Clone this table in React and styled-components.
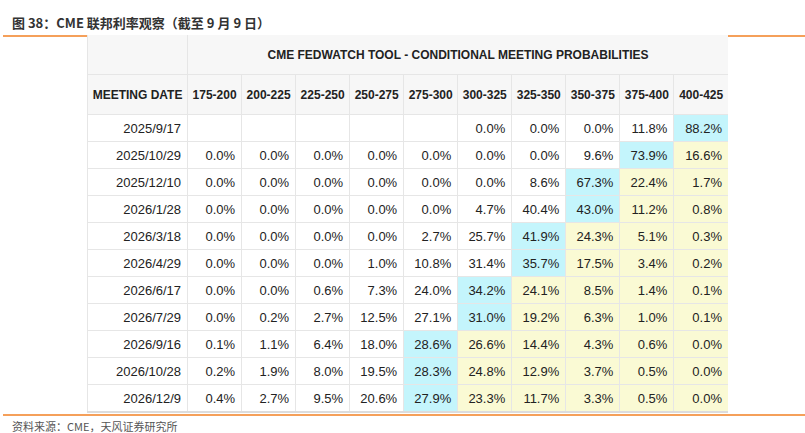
import React from "react";
import styled, { createGlobalStyle } from "styled-components";

const GlobalStyle = createGlobalStyle`
  body {
    margin: 0;
    background: #fff;
    font-family: "Liberation Sans", Arial, sans-serif;
  }
`;

const Page = styled.div`
  width: 805px;
`;

const Title = styled.div`
  height: 37px;
  margin-left: 3px;
  padding-left: 9px;
  box-sizing: border-box;
  display: flex;
  align-items: flex-end;
  padding-bottom: 4px;
  border-bottom: 2px solid #f5a05a;
  font-family: "Noto Sans CJK SC", "Noto Sans", sans-serif;
  font-size: 13px;
  line-height: 16px;
  font-weight: 700;
  color: #333;
`;

const Figure = styled.div`
  position: relative;
  margin-top: -2px;
  padding-left: 87px;
  display: flex;
`;

const Table = styled.table`
  border-collapse: collapse;
  table-layout: fixed;
  width: 641px;
  border-left: 1px solid #e2e2e2;
  border-bottom: 2px solid #dcdcdc;
  color: #222;
`;

const HeadCell = styled.th`
  background: #f7f7f7;
  height: ${(p) => p.$h}px;
  padding: 0;
  border: 1px solid #e6e6e6;
  border-top: none;
  font-size: 12px;
  font-weight: 700;
  text-align: center;
  white-space: nowrap;
  &:last-child {
    border-right: none;
  }
`;

const Cell = styled.td`
  height: 26px;
  padding: 0 6px 0 0;
  border: 1px solid #e6e6e6;
  font-size: 13px;
  text-align: right;
  white-space: nowrap;
  background: ${(p) =>
    p.$tone === "max" ? "#c4f5fc" : p.$tone === "above" ? "#fafad4" : "#fff"};
  &:last-child {
    border-right: none;
  }
`;

const Footer = styled.div`
  margin-top: 1px;
  margin-left: 3px;
  padding: 3px 0 0 9px;
  border-top: 2px solid #f5a05a;
  font-family: "Noto Sans CJK SC", "Noto Sans", sans-serif;
  font-size: 11px;
  line-height: 15px;
  color: #555;
`;

const ranges = [
  "175-200", "200-225", "225-250", "250-275", "275-300",
  "300-325", "325-350", "350-375", "375-400", "400-425",
];

const rows = [
  ["2025/9/17", [null, null, null, null, null, 0.0, 0.0, 0.0, 11.8, 88.2]],
  ["2025/10/29", [0, 0, 0, 0, 0, 0, 0, 9.6, 73.9, 16.6]],
  ["2025/12/10", [0, 0, 0, 0, 0, 0, 8.6, 67.3, 22.4, 1.7]],
  ["2026/1/28", [0, 0, 0, 0, 0, 4.7, 40.4, 43.0, 11.2, 0.8]],
  ["2026/3/18", [0, 0, 0, 0, 2.7, 25.7, 41.9, 24.3, 5.1, 0.3]],
  ["2026/4/29", [0, 0, 0, 1.0, 10.8, 31.4, 35.7, 17.5, 3.4, 0.2]],
  ["2026/6/17", [0, 0, 0.6, 7.3, 24.0, 34.2, 24.1, 8.5, 1.4, 0.1]],
  ["2026/7/29", [0, 0.2, 2.7, 12.5, 27.1, 31.0, 19.2, 6.3, 1.0, 0.1]],
  ["2026/9/16", [0.1, 1.1, 6.4, 18.0, 28.6, 26.6, 14.4, 4.3, 0.6, 0.0]],
  ["2026/10/28", [0.2, 1.9, 8.0, 19.5, 28.3, 24.8, 12.9, 3.7, 0.5, 0.0]],
  ["2026/12/9", [0.4, 2.7, 9.5, 20.6, 27.9, 23.3, 11.7, 3.3, 0.5, 0.0]],
];

// highest probability is blue, everything to its right is yellow
const toneFor = (values, i) => {
  let best = 0;
  values.forEach((v, j) => {
    if (v !== null && v > values[best]) best = j;
  });
  if (i === best) return "max";
  if (i > best) return "above";
  return "plain";
};

export default function App() {
  return (
    <Page>
      <GlobalStyle />
      <Title>图 38：CME 联邦利率观察（截至 9 月 9 日）</Title>
      <Figure>
        <Table>
          <colgroup>
            <col style={{ width: 100 }} />
            {ranges.map((r) => (
              <col key={r} style={{ width: 54 }} />
            ))}
          </colgroup>
          <thead>
            <tr>
              <HeadCell $h={39} />
              <HeadCell $h={39} colSpan={10}>
                CME FEDWATCH TOOL - CONDITIONAL MEETING PROBABILITIES
              </HeadCell>
            </tr>
            <tr>
              <HeadCell $h={39}>MEETING DATE</HeadCell>
              {ranges.map((r) => (
                <HeadCell key={r} $h={39}>
                  {r}
                </HeadCell>
              ))}
            </tr>
          </thead>
          <tbody>
            {rows.map(([date, values]) => (
              <tr key={date}>
                <Cell>{date}</Cell>
                {values.map((v, i) => (
                  <Cell key={i} $tone={toneFor(values, i)}>
                    {v === null ? "" : `${v.toFixed(1)}%`}
                  </Cell>
                ))}
              </tr>
            ))}
          </tbody>
        </Table>
      </Figure>
      <Footer>资料来源：CME，天风证券研究所</Footer>
    </Page>
  );
}
